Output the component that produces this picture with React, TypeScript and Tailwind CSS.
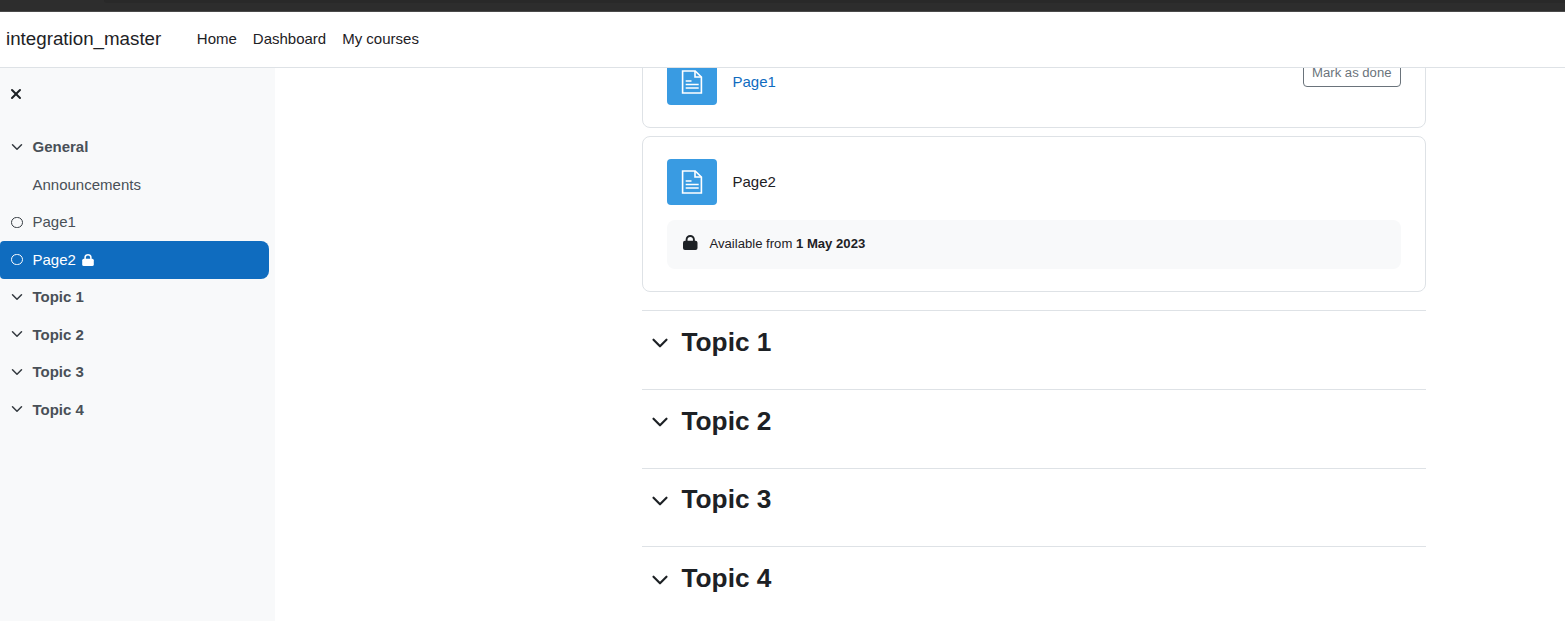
import { ChevronDown, X } from "lucide-react";

const font = "font-['Liberation_Sans',Arial,sans-serif]";

function Lock({ w, h, className }: { w: number; h: number; className?: string }) {
  return (
    <svg width={w} height={h} viewBox="0 0 14.5 15" className={className}>
      <rect x="0" y="5.8" width="14.5" height="9.2" rx="2" fill="currentColor" />
      <path d="M3.6 7V4.6a3.65 3.65 0 0 1 7.3 0V7" fill="none" stroke="currentColor" strokeWidth="1.9" />
    </svg>
  );
}

function PageIcon() {
  return (
    <div className="w-[50px] h-[46px] bg-[#399be2] rounded-[4px] flex items-center justify-center shrink-0">
      <svg width="22" height="24" viewBox="0 0 22 24" fill="none" stroke="#fff" strokeWidth="1.6">
        <path d="M1.6 1h12.6l6.2 6v16H1.6z" />
        <path d="M14 1v6h6.4" />
        <path d="M4.7 11h5.8M4.7 14.5h13M4.7 18h13" />
      </svg>
    </div>
  );
}

function SideTopic({ label }: { label: string }) {
  return (
    <div className="h-[37.5px] flex items-center pl-[7.5px] text-[#495057] font-bold">
      <ChevronDown size={18} strokeWidth={2} className="mr-[7px] text-[#343a40] -mt-[1px]" />
      <span>{label}</span>
    </div>
  );
}

function TopicHead({ label }: { label: string }) {
  return (
    <div className="h-[78.75px] border-t border-[#dee2e6] flex items-center pb-[16px] pl-[4.5px] shrink-0">
      <ChevronDown size={26} strokeWidth={2} className="mr-[9px] text-[#1d2125] mt-[3px]" />
      <h3 className="text-[26.25px] font-bold text-[#1d2125] leading-none">{label}</h3>
    </div>
  );
}

export default function App() {
  return (
    <div className={`${font} h-[621px] w-[1565px] flex flex-col overflow-hidden bg-white text-[15px] text-[#1d2125]`}>
      {/* browser chrome left over at the top */}
      <div className="h-[12px] bg-[#2d2d2d] border-b border-[#4a4a4a] shrink-0 pl-[104px]">
        <div className="h-[3px] bg-[#292929] rounded-bl-[6px]" />
      </div>

      <nav className="h-[56px] bg-white border-b border-[#dee2e6] flex items-center pl-[6px] shrink-0">
        <span className="text-[18.75px] mr-[35.5px]">integration_master</span>
        <div className="flex gap-[16px]">
          <span>Home</span>
          <span>Dashboard</span>
          <span>My courses</span>
        </div>
      </nav>

      <div className="flex flex-1 min-h-0">
        <aside className="w-[275px] bg-[#f8f9fa] shrink-0 flex flex-col">
          <div className="h-[60.5px] flex items-center pl-[8px] pb-[9px]">
            <X size={16} strokeWidth={3} className="text-[#1d2125]" />
          </div>
          <SideTopic label="General" />
          <div className="h-[37.5px] flex items-center pl-[32.5px] text-[#495057]">Announcements</div>
          <div className="h-[37.5px] flex items-center pl-[10.5px] text-[#495057]">
            <span className="w-[12px] h-[11px] rounded-full border-[1.7px] border-[#343a40] mr-[10px]" />
            Page1
          </div>
          <div className="h-[37.5px] w-[269px] flex items-center pl-[10.5px] bg-[#0f6cbf] text-white rounded-r-[8px] rounded-l-[4px]">
            <span className="w-[12px] h-[11px] rounded-full border-[1.5px] border-white mr-[10px]" />
            Page2
            <Lock w={12} h={12} className="ml-[6px]" />
          </div>
          <SideTopic label="Topic 1" />
          <SideTopic label="Topic 2" />
          <SideTopic label="Topic 3" />
          <SideTopic label="Topic 4" />
        </aside>

        <main className="flex-1 min-w-0 overflow-hidden pl-[367px] pr-[139px]">
          <div className="flex flex-col -mt-[32px]">
            <div className="h-[92px] border border-[#dee2e6] rounded-[8px] flex items-start pt-[22px] pl-[24px] pr-[24px] shrink-0">
              <PageIcon />
              <a className="text-[#0f6cbf] ml-[15.5px] mt-[12px]">Page1</a>
              <button className="ml-auto h-[28px] px-[8.5px] border border-[#6a737b] rounded-[4px] text-[13.125px] text-[#6a737b]">
                Mark as done
              </button>
            </div>
            <div className="h-[155.5px] mt-[8px] border border-[#dee2e6] rounded-[8px] pt-[22px] px-[24px] shrink-0">
              <div className="flex items-center">
                <PageIcon />
                <span className="ml-[15.5px]">Page2</span>
              </div>
              <div className="mt-[15px] h-[48.5px] bg-[#f8f9fa] rounded-[8px] flex items-center pl-[16px] text-[13.125px]">
                <Lock w={14.5} h={15} className="mr-[12px] -mt-[3px]" />
                <span>
                  Available from <strong>1 May 2023</strong>
                </span>
              </div>
            </div>
            <div className="mt-[18.5px] flex flex-col">
              <TopicHead label="Topic 1" />
              <TopicHead label="Topic 2" />
              <TopicHead label="Topic 3" />
              <TopicHead label="Topic 4" />
            </div>
          </div>
        </main>
      </div>
    </div>
  );
}
